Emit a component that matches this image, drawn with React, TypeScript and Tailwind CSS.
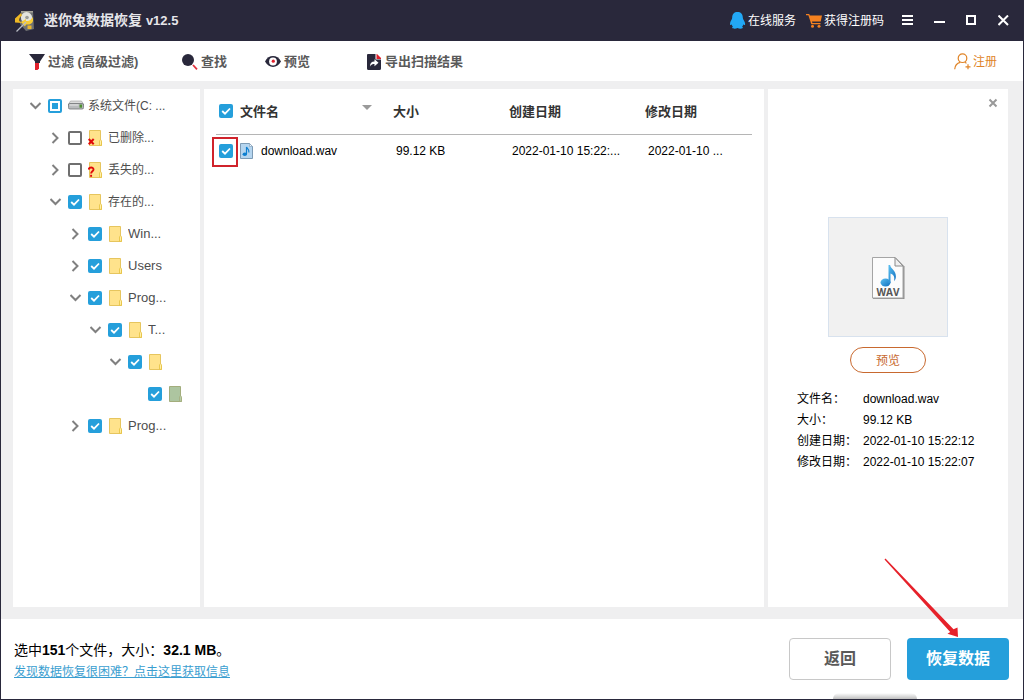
import { useState, type ReactNode } from "react";
import clsx from "clsx";

type CheckState = "on" | "off" | "partial";
type IconKind = "drive" | "folder" | "deleted" | "lost" | "green";

interface TreeNode {
  id: string;
  level: number;
  label: string;
  icon: IconKind;
  state: CheckState;
  arrow?: "down" | "right";
}

const treeNodes: TreeNode[] = [
  { id: "drive", level: 0, label: "系统文件(C: ...", icon: "drive", state: "partial", arrow: "down" },
  { id: "deleted", level: 1, label: "已删除...", icon: "deleted", state: "off", arrow: "right" },
  { id: "lost", level: 1, label: "丢失的...", icon: "lost", state: "off", arrow: "right" },
  { id: "existing", level: 1, label: "存在的...", icon: "folder", state: "on", arrow: "down" },
  { id: "win", level: 2, label: "Win...", icon: "folder", state: "on", arrow: "right" },
  { id: "users", level: 2, label: "Users", icon: "folder", state: "on", arrow: "right" },
  { id: "prog", level: 2, label: "Prog...", icon: "folder", state: "on", arrow: "down" },
  { id: "t", level: 3, label: "T...", icon: "folder", state: "on", arrow: "down" },
  { id: "sub", level: 4, label: "", icon: "folder", state: "on", arrow: "down" },
  { id: "leaf", level: 5, label: "", icon: "green", state: "on" },
  { id: "prog2", level: 2, label: "Prog...", icon: "folder", state: "on", arrow: "right" },
];

const indents = ["pl-[17px]", "pl-[37px]", "pl-[57px]", "pl-[77px]", "pl-[97px]", "pl-[117px]"];

const details = [
  { name: "文件名：", value: "download.wav" },
  { name: "大小：", value: "99.12 KB" },
  { name: "创建日期：", value: "2022-01-10 15:22:12" },
  { name: "修改日期：", value: "2022-01-10 15:22:07" },
];

function Checkbox({ label, initial = "on" }: { label: string; initial?: CheckState }) {
  const [state, setState] = useState<CheckState>(initial);

  return (
    <span className="grid size-[14px] shrink-0">
      <input
        type="checkbox"
        aria-label={label}
        checked={state === "on"}
        onChange={() => setState(state === "on" ? "off" : "on")}
        className={clsx(
          "col-start-1 row-start-1 size-[14px] appearance-none rounded-[2px]",
          state === "on" && "bg-[#259fdb]",
          state === "off" && "border-2 border-[#6f6f6f] bg-white",
          state === "partial" && "border-2 border-[#259fdb] bg-white"
        )}
      />
      {state === "on" && (
        <svg viewBox="0 0 14 14" className="pointer-events-none col-start-1 row-start-1 size-[14px]">
          <path d="M3.2 7 6 9.7l5-5.2" fill="none" stroke="#fff" strokeWidth="1.8" />
        </svg>
      )}
      {state === "partial" && (
        <span className="pointer-events-none col-start-1 row-start-1 size-[6px] place-self-center bg-[#259fdb]" />
      )}
    </span>
  );
}

function Arrow({ dir }: { dir: "down" | "right" }) {
  return (
    <svg viewBox="0 0 12 12" className="size-3" fill="none" stroke="#808080" strokeWidth="2">
      <path d={dir === "down" ? "M.5 3 5.500 8l5-5" : "M2.500 1l5 5-5 5"} />
    </svg>
  );
}

function NodeIcon({ kind }: { kind: IconKind }) {
  if (kind === "drive") {
    return (
      <svg viewBox="0 0 16 16" className="size-4 shrink-0">
        <path d="M2.5 3h11L16 7H0z" fill="#dcdcdc" stroke="#9a9a9a" strokeWidth=".6" />
        <rect x=".4" y="5.500" width="15.2" height="5.500" rx="1.500" fill="#b9bbbd" stroke="#6f7173" strokeWidth=".8" />
        <path d="M1.5 7h9" stroke="#e8e8e8" />
        <rect x="11.5" y="6.500" width="2.6" height="3.2" fill="#4e8f30" />
      </svg>
    );
  }
  const green = kind === "green";
  return (
    <svg viewBox="0 0 16 16" className="size-4 shrink-0">
      <path
        d="M1.5.5h11v10.8l1 .7v3.5h-12z"
        fill={green ? "#adc5a0" : "#ffe38c"}
        stroke={green ? "#a3ad7c" : "#e6c55e"}
      />
      <path
        d="M11.5 15.3v-4.5l1-1 1 1v4.5z"
        fill={green ? "#b9cda9" : "#fff0a8"}
        stroke={green ? "#a3ad7c" : "#e6c03e"}
        strokeWidth=".8"
      />
      {kind === "deleted" && (
        <path d="M.7 9l5 5.2M5.7 9l-5 5.2" stroke="#e00a0a" strokeWidth="2" />
      )}
      {kind === "lost" && (
        <g fill="none" stroke="#e00a0a" strokeWidth="1.9">
          <path d="M.7 7.6C.8 5 5.5 4.8 5.5 7.4c0 1.8-2.4 1.9-2.4 4.2" />
          <path d="M3.1 12.8v2" />
        </g>
      )}
    </svg>
  );
}

function ToolButton({ icon, text, width }: { icon: ReactNode; text: string; width?: string }) {
  return (
    <button
      className={clsx(
        "flex items-center gap-[3px] text-[13px] font-semibold whitespace-nowrap text-[#5a5a5a]",
        width
      )}>
      {icon}
      {text}
    </button>
  );
}

function TitleBar() {
  return (
    <header className="flex h-[41px] shrink-0 items-center bg-[#29283b] pr-[3px] pl-[14px] text-white">
      <svg viewBox="0 0 20 22" className="mr-[9px] h-[22px] w-5">
        <path d="M6 1h12l1 18-8 2L5 14z" fill="#6f7172" />
        <path d="M6 1h12v1.5H6z" fill="#a8a69a" />
        <ellipse cx="11.5" cy="7.5" rx="5.6" ry="5.4" fill="#e4e4de" />
        <circle cx="12" cy="7.5" r="1.8" fill="#9a9b98" />
        <path d="M0 8.5 6 3l1 2.5c-2 1-3 3-2.6 5.500L7 13l-7-.5z" fill="#efb925" />
        <path d="M18 7v4c-1 3-4 4-7 3.500l-1 2-4-4.500 5-3v2c3 .5 5-1 7-4z" fill="#f6cb35" />
        <path d="M11 12 1.500 21.500" stroke="#b9bcc4" strokeWidth="1.3" />
        <rect x="12.500" y="15.500" width="4" height="3.500" fill="#e9b62c" />
      </svg>
      <h1 className="text-sm font-bold text-[#e6e6ea]">
        迷你兔数据恢复 <span className="text-[13px]">v12.5</span>
      </h1>
      <nav className="ml-auto flex gap-[10px] text-xs">
        <a href="#service" className="flex items-center gap-[2px]">
          <svg viewBox="0 0 16 17" className="h-[17px] w-4" fill="#22a8f5">
            <path d="M7.500 0c3.300 0 5.300 2 5.300 5.500 0 1 .4 1.800 1 2.800.9 1.500 1.500 3 1.300 4.200-.2.900-1 .7-1.700-.3-.3 1.200-.8 1.800-1.400 2.400.8.400 1 .9.700 1.400-.6.900-3.800.8-5.200 0-1.400.8-4.600.9-5.200 0-.3-.5-.1-1 .7-1.400-.6-.6-1.100-1.200-1.400-2.400-.7 1-1.300 1.200-1.500.3-.2-1.200.2-2.700 1.100-4.200.6-1 1-1.800 1-2.800C2.200 2 4.200 0 7.500 0z" />
          </svg>
          在线服务
        </a>
        <a href="#license" className="flex items-center gap-[2px]">
          <svg viewBox="0 0 16 14" className="h-[14px] w-4" fill="#f5811f">
            <path d="M0 0h3.200l.7 1.500H16l-1.300 6H6l.4 1.400h8.100v1.300H5.300L2.400 1.300H0z" />
            <circle cx="6.500" cy="12.200" r="1.500" />
            <circle cx="13" cy="12.200" r="1.500" />
          </svg>
          获得注册码
        </a>
      </nav>
      <div className="ml-2 flex">
        <button aria-label="菜单" className="flex h-8 w-8 items-center justify-center">
          <svg viewBox="0 0 12 12" className="size-3" stroke="#fff" strokeWidth="2">
            <path d="M0 1h11M0 5h11M0 9h11" />
          </svg>
        </button>
        <button aria-label="最小化" className="flex h-8 w-8 items-center justify-center">
          <svg viewBox="0 0 12 12" className="size-3" stroke="#fff" strokeWidth="2">
            <path d="M0 7h11" />
          </svg>
        </button>
        <button aria-label="最大化" className="flex h-8 w-8 items-center justify-center">
          <svg viewBox="0 0 12 12" className="size-3" fill="none" stroke="#fff" strokeWidth="2">
            <path d="M1 1h8v8H1z" />
          </svg>
        </button>
        <button aria-label="关闭" className="flex h-8 w-8 items-center justify-center">
          <svg viewBox="0 0 12 12" className="size-3" stroke="#fff" strokeWidth="2">
            <path d="M.5.5 10 10M10 .5.500 10" />
          </svg>
        </button>
      </div>
    </header>
  );
}

function Toolbar() {
  return (
    <div className="flex h-10 shrink-0 items-center bg-white pt-px pr-[26px] pl-7">
      <ToolButton
        width="w-[153px]"
        text="过滤 (高级过滤)"
        icon={
          <svg viewBox="0 0 16 16" className="size-4 shrink-0">
            <path d="M0 0h16l-5 7.500V9h-5V7.500z" fill="#29283b" />
            <path d="M6 9h4v5.500L8.500 16H6z" fill="#e0202c" />
          </svg>
        }
      />
      <ToolButton
        width="w-[83px]"
        text="查找"
        icon={
          <svg viewBox="0 0 16 16" className="size-4 shrink-0">
            <circle cx="6" cy="6" r="6" fill="#29283b" />
            <path d="M11 11l4 4.300" stroke="#e0303c" strokeWidth="1.800" />
          </svg>
        }
      />
      <ToolButton
        width="w-[101px]"
        text="预览"
        icon={
          <svg viewBox="0 0 16 16" className="size-4 shrink-0">
            <path d="M0 7.500C3.500.3 12.500.3 16 7.500c-3.500 7.200-12.500 7.200-16 0z" fill="#29283b" />
            <circle cx="8" cy="7.500" r="3.900" fill="#fff" />
            <circle cx="8.300" cy="7.200" r="1.600" fill="#e0202c" />
          </svg>
        }
      />
      <ToolButton
        text="导出扫描结果"
        icon={
          <svg viewBox="0 0 16 16" className="size-4 shrink-0">
            <path d="M2 0h7.500v5.500H15V14.500a1.500 1.500 0 0 1-1.500 1.500h-11A1.500 1.500 0 0 1 1 14.500V1a1 1 0 0 1 1-1z" fill="#29283b" />
            <path d="M10.500 0H11l4 4v1h-4.500z" fill="#e0202c" />
            <path d="M4 12.500c0-3.500 1.500-5 4.500-5V5.200l4 3.600-4 3.500v-2.200c-2 0-3.300.6-4.500 2.400z" fill="#fff" />
          </svg>
        }
      />
      <a href="#register" className="ml-auto flex items-center gap-[2px] text-xs text-[#e08427]">
        <svg viewBox="0 0 17 17" className="size-[17px]" fill="none" stroke="#e08427" strokeWidth="1.200">
          <circle cx="8.500" cy="5.200" r="4.300" />
          <path d="M.7 16.200c.3-3.700 2.500-6 5.500-6.800M10.800 9.300l1.700.9M14 11.300v5M11.500 13.800h5" />
        </svg>
        注册
      </a>
    </div>
  );
}

function FolderTree() {
  return (
    <aside className="w-[187px] shrink-0 bg-white pt-px">
      <ul>
        {treeNodes.map((node) => (
          <li key={node.id} className={clsx("flex h-8 items-center", indents[node.level])}>
            <span className="mr-[6px] size-3">
              {node.arrow && (
                <button aria-label="展开" className="block">
                  <Arrow dir={node.arrow} />
                </button>
              )}
            </span>
            <Checkbox label={node.label || node.id} initial={node.state} />
            <span className="mr-1 ml-[6px] flex">
              <NodeIcon kind={node.icon} />
            </span>
            <span
              className={clsx(
                "truncate text-[#4d4d4d]",
                node.level < 2 ? "text-xs" : "text-[13px]"
              )}>
              {node.label}
            </span>
          </li>
        ))}
      </ul>
    </aside>
  );
}

function FileTable() {
  return (
    <main className="min-w-0 flex-1 bg-white px-3">
      <table className="w-full table-fixed text-left text-[13px]">
        <colgroup>
          <col className="w-6" />
          <col className="w-[153px]" />
          <col className="w-[116px]" />
          <col className="w-[136px]" />
          <col />
        </colgroup>
        <thead>
          <tr className="h-[45px] border-b border-[#b5b5b5] text-[#333]">
            <th className="pl-[3px]">
              <Checkbox label="全选" />
            </th>
            <th>
              <div className="flex items-center justify-between pr-[21px]">
                文件名
                <svg viewBox="0 0 10 5" className="mb-2 h-[5px] w-[10px]">
                  <path d="M0 0h10L5 5z" fill="#9a9a9a" />
                </svg>
              </div>
            </th>
            <th>大小</th>
            <th>创建日期</th>
            <th>修改日期</th>
          </tr>
        </thead>
        <tbody>
          <tr className="h-[34px] text-xs text-black">
            <td className="relative pl-[3px]">
              <Checkbox label="download.wav" />
              <span className="pointer-events-none absolute top-[2px] -left-1 h-[30px] w-[26px] border-2 border-[#d0232b]" />
            </td>
            <td>
              <div className="flex items-center gap-2">
                <svg viewBox="0 0 13 16" className="h-4 w-[13px]">
                  <path d="M.5.5h9l3 3v12H.5z" fill="#b5d5ef" stroke="#7d9bb5" />
                  <path d="M9.500.5v3h3z" fill="#f1f7fc" stroke="#7d9bb5" strokeWidth=".6" />
                  <ellipse cx="4.800" cy="11.200" rx="2.200" ry="1.700" fill="#0d7fd0" />
                  <path d="M6.500 11V4c.4 1.600 3 2 2.400 5.500" fill="none" stroke="#0d7fd0" strokeWidth="1.200" />
                </svg>
                download.wav
              </div>
            </td>
            <td className="pl-[3px]">99.12 KB</td>
            <td className="pl-[3px]">2022-01-10 15:22:...</td>
            <td className="pl-[3px]">2022-01-10 ...</td>
          </tr>
        </tbody>
      </table>
    </main>
  );
}

function PreviewPanel() {
  return (
    <aside className="flex w-60 shrink-0 flex-col items-center bg-white">
      <button aria-label="关闭预览" className="mt-[6px] mr-[7px] flex size-4 items-center justify-center self-end">
        <svg viewBox="0 0 10 10" className="size-[10px]" stroke="#999" strokeWidth="2">
          <path d="M1.500 1.500l7 7M8.500 1.500l-7 7" />
        </svg>
      </button>
      <div className="mt-[106px] flex size-[120px] items-center justify-center border border-[#d8e2ee] bg-[#f1f1f1]">
        <svg viewBox="0 -2 34 46" className="h-[46px] w-[34px]">
          <defs>
            <linearGradient id="note" x1="0" y1="0" x2="1" y2="1">
              <stop offset="0" stopColor="#5cc0f0" />
              <stop offset="1" stopColor="#0f6fc0" />
            </linearGradient>
          </defs>
          <path d="M2 2h23l8.500 8.500v32.500H2z" fill="#8f8f8f" />
          <path d="M1.500 1.500h22.500l8 8.500v32H1.500z" fill="#fcfcfc" stroke="#a5a5a5" />
          <path d="M24 1.500v8.500h8z" fill="#f0f0f0" stroke="#8a8a8a" />
          <ellipse cx="14.500" cy="26.500" rx="5" ry="4" fill="url(#note)" />
          <path d="M17.500 27V9h1.600c.7 4 6 5.500 5.800 11.500 0 2-.8 3.600-1.800 4.800.8-4.500-.5-7-3.600-7.800V27z" fill="url(#note)" />
          <text x="17" y="40" textAnchor="middle" fontSize="10" fontWeight="700" fontFamily="Open Sans, sans-serif" fill="#555">
            WAV
          </text>
        </svg>
      </div>
      <button className="mt-[10px] h-[26px] w-[76px] rounded-full border border-[#c8692f] pt-px text-xs text-[#c8692f]">
        预览
      </button>
      <dl className="mt-4 grid w-full grid-cols-[66px_1fr] items-baseline pl-[29px] text-xs leading-[21px] text-black">
        {details.map((item) => (
          <div key={item.name} className="contents">
            <dt className="leading-[21px]">{item.name}</dt>
            <dd className="leading-[21px]">{item.value}</dd>
          </div>
        ))}
      </dl>
    </aside>
  );
}

function Footer() {
  return (
    <footer className="relative flex h-20 shrink-0 items-center justify-between bg-white pr-[14px] pl-[13px]">
      <div className="pt-1">
        <p className="text-sm leading-[22px] text-black">
          选中<b>151</b>个文件，大小：<b>32.1 MB</b>。
        </p>
        <a href="#help" className="block text-xs leading-[22px] text-[#3a9ed0] underline">
          发现数据恢复很困难？点击这里获取信息
        </a>
      </div>
      <div className="flex gap-4">
        <button className="h-[42px] w-[102px] rounded border border-[#c8c8c8] text-base font-semibold text-[#5a5a5a]">
          返回
        </button>
        <div className="relative">
          <button className="h-[42px] w-[102px] rounded bg-[#259fdb] text-base font-bold text-white">
            恢复数据
          </button>
          <svg viewBox="0 0 76 80" className="pointer-events-none absolute right-[49px] bottom-full h-20 w-[76px]">
            <path d="M.5 1.500 1.500.5 69.500 71.200 73.500 69.500 74 79 63.500 75.800 66.200 74z" fill="#e6212a" />
          </svg>
        </div>
      </div>
      <span className="pointer-events-none absolute right-[106px] bottom-0 h-[6px] w-[84px] rounded-t-full bg-linear-to-t from-black/25 to-transparent" />
    </footer>
  );
}

export default function App() {
  return (
    <div className="flex min-h-screen flex-col border-x border-b border-[#29283b] bg-[#efeff0] font-['Liberation_Sans','Noto_Sans_CJK_SC',sans-serif]">
      <TitleBar />
      <Toolbar />
      <div className="flex flex-1 gap-1 pt-2 pr-[15px] pb-3 pl-3">
        <FolderTree />
        <FileTable />
        <PreviewPanel />
      </div>
      <Footer />
    </div>
  );
}
